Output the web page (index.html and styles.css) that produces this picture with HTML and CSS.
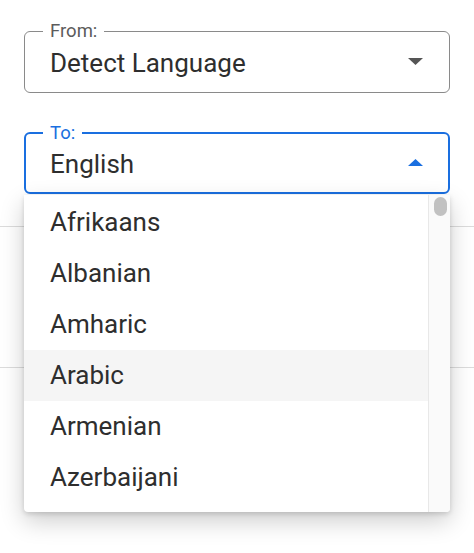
FILE: index.html
```html
<!DOCTYPE html>
<html lang="en">
<head>
<meta charset="utf-8">
<title>Translate</title>
<link rel="stylesheet" href="styles.css">
</head>
<body>
<div class="fields">
  <fieldset class="field">
    <legend class="field-label">From:</legend>
    <div class="field-row">
      <span class="field-value">Detect Language</span>
      <svg class="caret" width="15" height="7" viewBox="0 0 15 7"><path d="M0 0H15L7.5 7Z" fill="#555"/></svg>
    </div>
  </fieldset>
  <div class="select-wrap">
    <fieldset class="field field-active">
      <legend class="field-label">To:</legend>
      <div class="field-row">
        <span class="field-value">English</span>
        <svg class="caret" width="15" height="7" viewBox="0 0 15 7"><path d="M0 7H15L7.5 0Z" fill="#1a6fe0"/></svg>
      </div>
    </fieldset>
    <div class="menu">
      <ul class="menu-list">
        <li class="menu-item">Afrikaans</li>
        <li class="menu-item">Albanian</li>
        <li class="menu-item">Amharic</li>
        <li class="menu-item menu-item-hover">Arabic</li>
        <li class="menu-item">Armenian</li>
        <li class="menu-item">Azerbaijani</li>
      </ul>
      <div class="scrollbar"><div class="scroll-thumb"></div></div>
    </div>
  </div>
</div>
<div class="band"></div>
</body>
</html>
```
FILE: styles.css
```css
html, body {
  margin: 0;
  padding: 0;
  background: #fff;
  font-family: Roboto, "Liberation Sans", Arial, sans-serif;
  color: #2e2e2e;
}
body {
  min-height: 553px;
}
.fields {
  padding: 22px 24px 0 24px;
  display: flex;
  flex-direction: column;
  gap: 31px;
}
.field {
  margin: 0;
  border: 1px solid #8a8a8a;
  border-radius: 6px;
  padding: 9px 26px 15px 25px;
  min-width: 0;
}
.field-label {
  font-size: 18.5px;
  line-height: 18px;
  color: #5c5c5c;
  padding: 0 7px;
  margin-left: -7px;
}
.field-row {
  display: flex;
  align-items: center;
  justify-content: space-between;
  height: 28px;
}
.field-value {
  font-size: 26px;
  line-height: 28px;
  color: #2e2e2e;
}
.caret {
  display: block;
  margin-bottom: 4px;
}
.select-wrap {
  position: relative;
}
.field-active {
  border: 2px solid #1a6fe0;
  padding: 8px 25px 14px 24px;
}
.field-active .field-label {
  color: #1a6fe0;
}
.menu {
  position: absolute;
  z-index: 5;
  left: 0;
  right: 0;
  top: calc(100% + 1px);
  background: #fff;
  display: flex;
  border-radius: 0 0 4px 4px;
  box-shadow: 0 9px 24px rgba(0, 0, 0, 0.2), 0 2px 5px rgba(0, 0, 0, 0.14);
  height: 317px;
  overflow: hidden;
}
.menu-list {
  list-style: none;
  margin: 0;
  padding: 2px 0 0 0;
  flex: 1;
}
.menu-item {
  height: 51px;
  line-height: 51px;
  font-size: 26px;
  padding-left: 26px;
  color: #2e2e2e;
}
.menu-item-hover {
  background: #f5f5f5;
}
.scrollbar {
  width: 22px;
  border-left: 1px solid #e8e8e8;
  background: #fafafa;
  padding: 2px 0 0 5px;
  box-sizing: border-box;
}
.scroll-thumb {
  width: 13px;
  height: 19px;
  border-radius: 7px;
  background: #c1c1c1;
}
.band {
  margin-top: 32px;
  height: 140px;
  border-top: 1px solid #dcdcdc;
  border-bottom: 1px solid #dcdcdc;
}
```
